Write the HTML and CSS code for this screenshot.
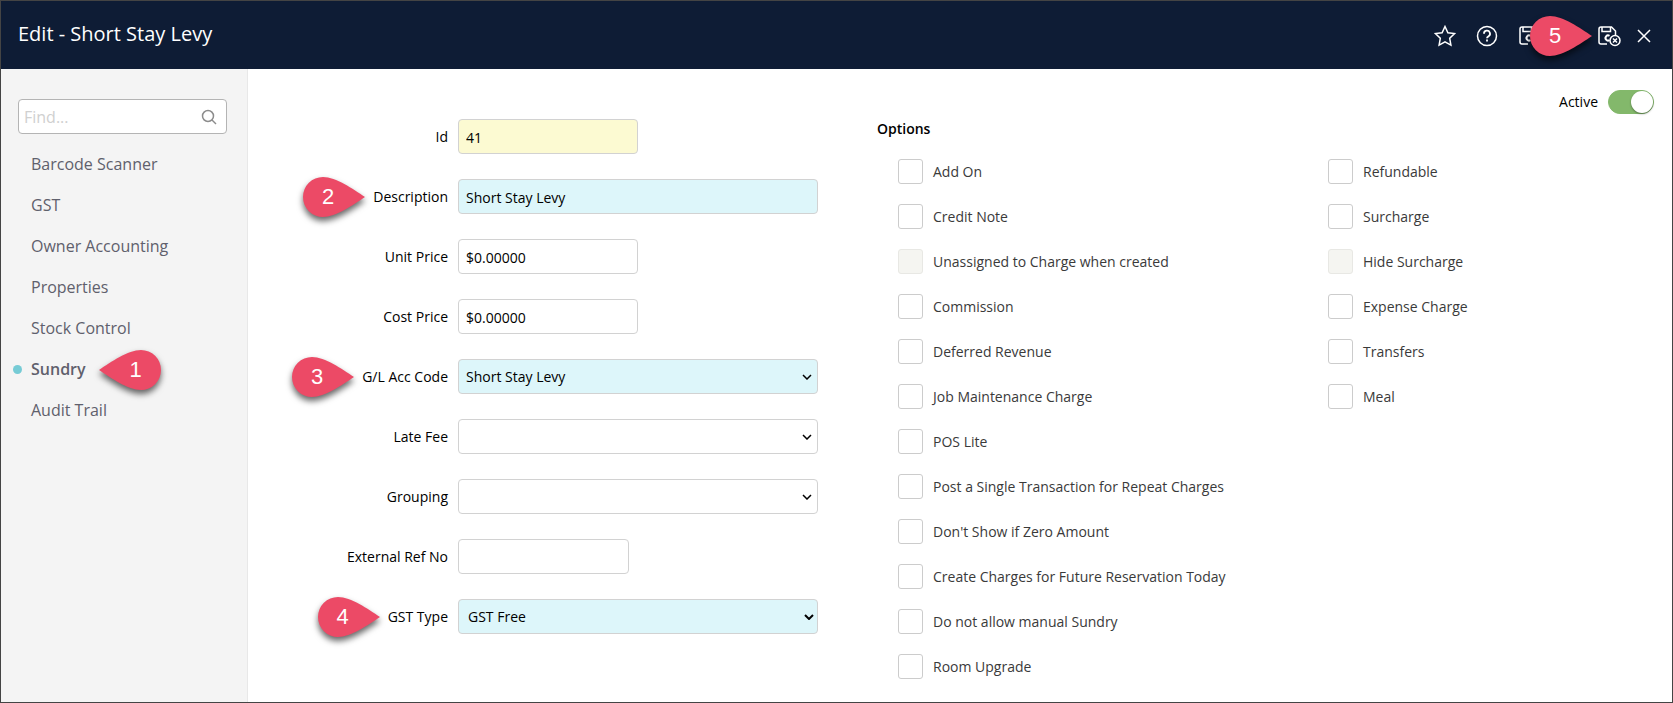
FILE: index.html
```html
<!DOCTYPE html>
<html lang="en">
<head>
    <meta charset="UTF-8">
    <meta name="viewport" content="width=device-width, initial-scale=1.0">
    <title>Edit - Short Stay Levy</title>
    <link rel="stylesheet" href="styles.css">
</head>
<body>
    <!-- Callout shape and save icon, shared -->
    <svg class="sprite" aria-hidden="true">
        <symbol id="drop" viewBox="0 0 62 40">
            <path d="M62 20 C50 12 33 0 20 0 A20 20 0 0 0 20 40 C33 40 50 28 62 20Z"/>
        </symbol>
        <symbol id="save" viewBox="0 0 24 22">
            <path d="M10 19H4a2 2 0 0 1-2-2V4a2 2 0 0 1 2-2h10.500l4 4v4"/>
            <path d="M5 2v4.500h8.500V2"/>
            <path d="M12.500 10.800a2.600 2.600 0 1 0 0 4.400" stroke-width="2"/>
        </symbol>
    </svg>

    <header class="header">
        <h1>Edit - Short Stay Levy</h1>
        <div class="actions">
            <button type="button" aria-label="Favourite">
                <svg width="22" height="22" viewBox="0 0 22 22"><path d="M11 1.500l2.900 6.200 6.700.9-4.900 4.700 1.200 6.900-5.900-3.300-5.900 3.300 1.200-6.900L1.400 8.600l6.700-.9z"/></svg>
            </button>
            <button type="button" aria-label="Help">
                <svg width="22" height="22" viewBox="0 0 22 22"><circle cx="11" cy="11" r="9.500"/><path d="M8 8.800a3 3 0 1 1 4.600 2.400c-1.100.7-1.600 1-1.600 2" stroke-width="1.800"/><path d="M11 14.600v1.800" stroke-width="1.800"/></svg>
            </button>
            <button type="button" aria-label="Save">
                <svg width="24" height="22"><use href="#save"/></svg>
            </button>
            <button type="button" aria-label="Save and close" class="save-exit">
                <svg width="24" height="22" viewBox="0 0 24 22"><use href="#save"/><circle class="badge" cx="18" cy="15.500" r="5"/><path d="M16 13.500l4 4M20 13.500l-4 4"/></svg>
                <span class="callout callout-save"><svg><use href="#drop"/></svg><span>5</span></span>
            </button>
            <button type="button" aria-label="Close">
                <svg width="14" height="14" viewBox="0 0 14 14"><path d="M1 1l12 12M13 1L1 13"/></svg>
            </button>
        </div>
    </header>

    <div class="layout">
        <aside class="sidebar">
            <div class="search">
                <input type="search" placeholder="Find..." aria-label="Find">
                <svg width="16" height="16" viewBox="0 0 16 16"><circle cx="7" cy="7" r="5.500"/><path d="M11 11l4 4"/></svg>
            </div>
            <nav>
                <a href="#">Barcode Scanner</a>
                <a href="#">GST</a>
                <a href="#">Owner Accounting</a>
                <a href="#">Properties</a>
                <a href="#">Stock Control</a>
                <a href="#" class="active">Sundry<span class="callout callout-left"><svg><use href="#drop"/></svg><span>1</span></span></a>
                <a href="#">Audit Trail</a>
            </nav>
        </aside>

        <main class="content">
            <label class="toggle">Active <input type="checkbox" role="switch" checked></label>

            <form class="panels">
                <div class="fields">
                    <div class="field">
                        <label for="id">Id</label>
                        <input type="text" id="id" class="medium readonly" value="41" readonly>
                    </div>
                    <div class="field">
                        <label for="description">Description<span class="callout"><svg><use href="#drop"/></svg><span>2</span></span></label>
                        <input type="text" id="description" class="required" value="Short Stay Levy">
                    </div>
                    <div class="field">
                        <label for="unitPrice">Unit Price</label>
                        <input type="text" id="unitPrice" class="medium" value="$0.00000">
                    </div>
                    <div class="field">
                        <label for="costPrice">Cost Price</label>
                        <input type="text" id="costPrice" class="medium" value="$0.00000">
                    </div>
                    <div class="field">
                        <label for="glCode">G/L Acc Code<span class="callout"><svg><use href="#drop"/></svg><span>3</span></span></label>
                        <div class="select">
                            <select id="glCode" class="required"><option>Short Stay Levy</option></select>
                            <svg width="10" height="6" viewBox="0 0 10 6"><path d="M1 1l4 4 4-4"/></svg>
                        </div>
                    </div>
                    <div class="field">
                        <label for="lateFee">Late Fee</label>
                        <div class="select">
                            <select id="lateFee"><option></option></select>
                            <svg width="10" height="6" viewBox="0 0 10 6"><path d="M1 1l4 4 4-4"/></svg>
                        </div>
                    </div>
                    <div class="field">
                        <label for="grouping">Grouping</label>
                        <div class="select">
                            <select id="grouping"><option></option></select>
                            <svg width="10" height="6" viewBox="0 0 10 6"><path d="M1 1l4 4 4-4"/></svg>
                        </div>
                    </div>
                    <div class="field">
                        <label for="externalRef">External Ref No</label>
                        <input type="text" id="externalRef" class="small">
                    </div>
                    <div class="field">
                        <label for="gstType">GST Type<span class="callout"><svg><use href="#drop"/></svg><span>4</span></span></label>
                        <div class="select native">
                            <select id="gstType" class="required"><option>GST Free</option></select>
                            <svg width="10" height="6" viewBox="0 0 10 6"><path d="M1 1l4 4 4-4"/></svg>
                        </div>
                    </div>
                </div>

                <section class="options">
                    <h2>Options</h2>
                    <div class="option-columns">
                        <div class="option-list">
                            <label><input type="checkbox"> Add On</label>
                            <label><input type="checkbox"> Credit Note</label>
                            <label><input type="checkbox" disabled> Unassigned to Charge when created</label>
                            <label><input type="checkbox"> Commission</label>
                            <label><input type="checkbox"> Deferred Revenue</label>
                            <label><input type="checkbox"> Job Maintenance Charge</label>
                            <label><input type="checkbox"> POS Lite</label>
                            <label><input type="checkbox"> Post a Single Transaction for Repeat Charges</label>
                            <label><input type="checkbox"> Don't Show if Zero Amount</label>
                            <label><input type="checkbox"> Create Charges for Future Reservation Today</label>
                            <label><input type="checkbox"> Do not allow manual Sundry</label>
                            <label><input type="checkbox"> Room Upgrade</label>
                        </div>
                        <div class="option-list">
                            <label><input type="checkbox"> Refundable</label>
                            <label><input type="checkbox"> Surcharge</label>
                            <label><input type="checkbox" disabled> Hide Surcharge</label>
                            <label><input type="checkbox"> Expense Charge</label>
                            <label><input type="checkbox"> Transfers</label>
                            <label><input type="checkbox"> Meal</label>
                        </div>
                    </div>
                </section>
            </form>
        </main>
    </div>
</body>
</html>
```

FILE: styles.css
```css
:root {
    --navy: #0e1c35;
    --accent: #ec4a66;
    --required: #ddf6fa;
    --border: #d2d2d2;
}

* {
    box-sizing: border-box;
    margin: 0;
    padding: 0;
}

body {
    display: flex;
    flex-direction: column;
    min-height: 100vh;
    border: 1px solid #444;
    background: white;
    color: #000;
    font-family: "Open Sans", "Noto Sans", sans-serif;
    font-size: 14px;
    line-height: 20px;
}

svg {
    display: block;
    fill: none;
    stroke: currentColor;
    stroke-width: 1.5;
}

input,
select,
button {
    font: inherit;
    color: inherit;
}

.sprite {
    position: absolute;
    width: 0;
    height: 0;
}

/* Header */
.header {
    display: flex;
    justify-content: space-between;
    height: 68px;
    padding: 2px 21px 0 17px;
    background: var(--navy);
    color: white;
}

h1 {
    font-size: 20px;
    font-weight: 400;
    line-height: 62px;
}

.actions {
    display: flex;
    align-items: center;
    gap: 20px;
}

.actions button {
    position: relative;
    border: none;
    background: none;
    cursor: pointer;
}

.actions .save-exit {
    margin-left: 35px;
}

.actions button:last-child {
    margin-left: -4px;
}

.badge {
    fill: var(--navy);
}

/* Numbered callouts */
.callout {
    position: absolute;
    top: 50%;
    right: 100%;
    width: 62px;
    height: 40px;
    margin-top: -20px;
    margin-right: 8px;
    color: white;
    font-family: "Liberation Sans", Arial, sans-serif;
    font-size: 22px;
    font-weight: 400;
    line-height: 40px;
}

.callout svg {
    position: absolute;
    width: 62px;
    height: 40px;
    overflow: visible;
    fill: var(--accent);
    stroke: none;
    filter: drop-shadow(0 4px 3px rgba(0, 0, 0, 0.6));
}

.callout > span {
    position: relative;
    display: block;
    width: 50px;
    text-align: center;
}

.callout-save {
    margin-right: 5px;
}

.callout-left {
    right: auto;
    left: 100%;
    margin-left: 13px;
}

.callout-left svg {
    transform: scaleX(-1);
}

.callout-left > span {
    margin-left: 12px;
}

/* Sidebar */
.layout {
    display: flex;
    flex: 1;
}

.sidebar {
    width: 247px;
    padding: 30px 20px 0 17px;
    background: #f4f4f4;
    border-right: 1px solid #e8e8e8;
    color: #5f606c;
    font-size: 16px;
}

.search {
    display: flex;
    align-items: center;
    height: 35px;
    padding: 0 9px 0 5px;
    border: 1px solid #b4b4b4;
    border-radius: 4px;
    background: white;
    color: #8c8c8c;
}

.search input {
    flex: 1;
    min-width: 0;
    border: none;
    outline: none;
    background: none;
}

.search input::placeholder {
    color: #d0d0d0;
}

.sidebar nav {
    display: flex;
    flex-direction: column;
    align-items: flex-start;
    padding: 10px 0 0 13px;
}

.sidebar a {
    position: relative;
    color: inherit;
    line-height: 41px;
    text-decoration: none;
}

.sidebar a.active {
    font-weight: 600;
}

.sidebar a.active::before {
    content: "";
    position: absolute;
    top: 16px;
    left: -18px;
    width: 9px;
    height: 9px;
    border-radius: 50%;
    background: #76cbd5;
}

/* Content */
.content {
    flex: 1;
    padding: 21px 18px 0 0;
}

.toggle {
    display: flex;
    align-items: center;
    justify-content: flex-end;
    gap: 10px;
}

.toggle input {
    appearance: none;
    display: flex;
    justify-content: flex-end;
    width: 46px;
    height: 24px;
    border: 1px solid #83b86b;
    border-radius: 12px;
    background: #83b86b;
}

.toggle input::before {
    content: "";
    width: 22px;
    height: 22px;
    border-radius: 50%;
    background: white;
    box-shadow: 0 1px 2px rgba(0, 0, 0, 0.4);
}

.panels {
    display: grid;
    grid-template-columns: 629fr 777fr;
    padding-top: 5px;
}

.fields {
    display: flex;
    flex-direction: column;
    gap: 25px;
}

.field {
    display: grid;
    grid-template-columns: 200px 360px;
    align-items: center;
    gap: 10px;
}

.field > label {
    position: relative;
    justify-self: end;
}

.field input,
.field select {
    width: 100%;
    height: 35px;
    padding: 1px 7px 0;
    border: 1px solid var(--border);
    border-radius: 4px;
    background: white;
}

.field .medium {
    width: 180px;
}

.field .small {
    width: 171px;
}

.field .readonly {
    background: #fcfad2;
}

.field .required {
    background: var(--required);
}

.select {
    display: grid;
    align-items: center;
}

.select > * {
    grid-area: 1 / 1;
}

.select select {
    appearance: none;
    padding-top: 0;
}

.select svg {
    justify-self: end;
    margin-right: 6px;
    pointer-events: none;
}

.native select {
    padding-left: 9px;
}

.native svg {
    margin-right: 4px;
    stroke-width: 2;
}

/* Options */
h2 {
    font-size: 14px;
    font-weight: 600;
    line-height: 20px;
}

.option-columns {
    display: grid;
    grid-template-columns: 430fr 326fr;
    padding: 20px 0 20px 21px;
}

.option-list {
    display: flex;
    flex-direction: column;
    gap: 20px;
}

.option-list label {
    display: flex;
    align-items: center;
    gap: 10px;
    color: #3a3a3a;
}

.option-list input {
    appearance: none;
    width: 25px;
    height: 25px;
    border: 1px solid #ccc;
    border-radius: 3px;
    background: white;
}

.option-list input:disabled {
    border-color: #e8e8e4;
    background: #f5f5f1;
}
```
